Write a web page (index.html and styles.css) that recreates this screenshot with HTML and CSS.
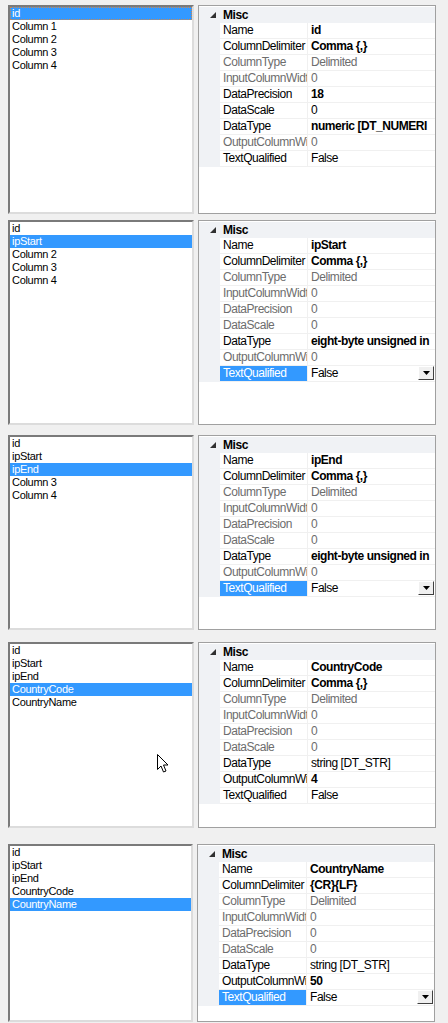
FILE: index.html
```html
<!DOCTYPE html>
<html>
<head>
<meta charset="utf-8">
<link rel="stylesheet" href="styles.css">
</head>
<body>
<div class="page">

  <div class="shot s1">
    <div class="list">
      <div class="item sel focus">id</div>
      <div class="item">Column 1</div>
      <div class="item">Column 2</div>
      <div class="item">Column 3</div>
      <div class="item">Column 4</div>
    </div>
    <div class="grid">
      <div class="row cat"><span class="mg"><svg class="tri" width="6" height="6" viewBox="0 0 6 6"><polygon points="6,0 6,6 0,6" fill="#303030"/></svg></span><span class="cname">Misc</span></div>
      <div class="row"><span class="mg"></span><span class="k">Name</span><span class="v b">id</span></div>
      <div class="row"><span class="mg"></span><span class="k">ColumnDelimiter</span><span class="v b">Comma {,}</span></div>
      <div class="row ro"><span class="mg"></span><span class="k">ColumnType</span><span class="v">Delimited</span></div>
      <div class="row ro"><span class="mg"></span><span class="k">InputColumnWidt</span><span class="v">0</span></div>
      <div class="row"><span class="mg"></span><span class="k">DataPrecision</span><span class="v b">18</span></div>
      <div class="row"><span class="mg"></span><span class="k">DataScale</span><span class="v">0</span></div>
      <div class="row"><span class="mg"></span><span class="k">DataType</span><span class="v b">numeric [DT_NUMERI</span></div>
      <div class="row ro"><span class="mg"></span><span class="k">OutputColumnWi</span><span class="v">0</span></div>
      <div class="row"><span class="mg"></span><span class="k">TextQualified</span><span class="v">False</span></div>
    </div>
  </div>

  <div class="shot s2">
    <div class="list">
      <div class="item">id</div>
      <div class="item sel">ipStart</div>
      <div class="item">Column 2</div>
      <div class="item">Column 3</div>
      <div class="item">Column 4</div>
    </div>
    <div class="grid">
      <div class="row cat"><span class="mg"><svg class="tri" width="6" height="6" viewBox="0 0 6 6"><polygon points="6,0 6,6 0,6" fill="#303030"/></svg></span><span class="cname">Misc</span></div>
      <div class="row"><span class="mg"></span><span class="k">Name</span><span class="v b">ipStart</span></div>
      <div class="row"><span class="mg"></span><span class="k">ColumnDelimiter</span><span class="v b">Comma {,}</span></div>
      <div class="row ro"><span class="mg"></span><span class="k">ColumnType</span><span class="v">Delimited</span></div>
      <div class="row ro"><span class="mg"></span><span class="k">InputColumnWidt</span><span class="v">0</span></div>
      <div class="row ro"><span class="mg"></span><span class="k">DataPrecision</span><span class="v">0</span></div>
      <div class="row ro"><span class="mg"></span><span class="k">DataScale</span><span class="v">0</span></div>
      <div class="row"><span class="mg"></span><span class="k">DataType</span><span class="v b">eight-byte unsigned in</span></div>
      <div class="row ro"><span class="mg"></span><span class="k">OutputColumnWi</span><span class="v">0</span></div>
      <div class="row selrow"><span class="mg"></span><span class="k">TextQualified</span><span class="v">False</span><span class="dd"><svg width="7" height="4" viewBox="0 0 7 4"><polygon points="0,0 7,0 3.5,4" fill="#000"/></svg></span></div>
    </div>
  </div>

  <div class="shot s3">
    <div class="list">
      <div class="item">id</div>
      <div class="item">ipStart</div>
      <div class="item sel">ipEnd</div>
      <div class="item">Column 3</div>
      <div class="item">Column 4</div>
    </div>
    <div class="grid">
      <div class="row cat"><span class="mg"><svg class="tri" width="6" height="6" viewBox="0 0 6 6"><polygon points="6,0 6,6 0,6" fill="#303030"/></svg></span><span class="cname">Misc</span></div>
      <div class="row"><span class="mg"></span><span class="k">Name</span><span class="v b">ipEnd</span></div>
      <div class="row"><span class="mg"></span><span class="k">ColumnDelimiter</span><span class="v b">Comma {,}</span></div>
      <div class="row ro"><span class="mg"></span><span class="k">ColumnType</span><span class="v">Delimited</span></div>
      <div class="row ro"><span class="mg"></span><span class="k">InputColumnWidt</span><span class="v">0</span></div>
      <div class="row ro"><span class="mg"></span><span class="k">DataPrecision</span><span class="v">0</span></div>
      <div class="row ro"><span class="mg"></span><span class="k">DataScale</span><span class="v">0</span></div>
      <div class="row"><span class="mg"></span><span class="k">DataType</span><span class="v b">eight-byte unsigned in</span></div>
      <div class="row ro"><span class="mg"></span><span class="k">OutputColumnWi</span><span class="v">0</span></div>
      <div class="row selrow"><span class="mg"></span><span class="k">TextQualified</span><span class="v">False</span><span class="dd"><svg width="7" height="4" viewBox="0 0 7 4"><polygon points="0,0 7,0 3.5,4" fill="#000"/></svg></span></div>
    </div>
  </div>

  <div class="shot s4">
    <div class="list">
      <div class="item">id</div>
      <div class="item">ipStart</div>
      <div class="item">ipEnd</div>
      <div class="item sel">CountryCode</div>
      <div class="item">CountryName</div>
      <svg class="cursor" width="13" height="20" viewBox="0 0 13 20"><path d="M0.5 0.5 L0.5 15.5 L4 12 L6.5 18 L9 17 L6.5 11 L11 11 Z" fill="#fff" stroke="#000" stroke-width="1" stroke-linejoin="miter"/></svg>
    </div>
    <div class="grid">
      <div class="row cat"><span class="mg"><svg class="tri" width="6" height="6" viewBox="0 0 6 6"><polygon points="6,0 6,6 0,6" fill="#303030"/></svg></span><span class="cname">Misc</span></div>
      <div class="row"><span class="mg"></span><span class="k">Name</span><span class="v b">CountryCode</span></div>
      <div class="row"><span class="mg"></span><span class="k">ColumnDelimiter</span><span class="v b">Comma {,}</span></div>
      <div class="row ro"><span class="mg"></span><span class="k">ColumnType</span><span class="v">Delimited</span></div>
      <div class="row ro"><span class="mg"></span><span class="k">InputColumnWidt</span><span class="v">0</span></div>
      <div class="row ro"><span class="mg"></span><span class="k">DataPrecision</span><span class="v">0</span></div>
      <div class="row ro"><span class="mg"></span><span class="k">DataScale</span><span class="v">0</span></div>
      <div class="row"><span class="mg"></span><span class="k">DataType</span><span class="v">string [DT_STR]</span></div>
      <div class="row"><span class="mg"></span><span class="k">OutputColumnWi</span><span class="v b">4</span></div>
      <div class="row"><span class="mg"></span><span class="k">TextQualified</span><span class="v">False</span></div>
    </div>
  </div>

  <div class="shot s5">
    <div class="list">
      <div class="item">id</div>
      <div class="item">ipStart</div>
      <div class="item">ipEnd</div>
      <div class="item">CountryCode</div>
      <div class="item sel">CountryName</div>
    </div>
    <div class="grid">
      <div class="row cat"><span class="mg"><svg class="tri" width="6" height="6" viewBox="0 0 6 6"><polygon points="6,0 6,6 0,6" fill="#303030"/></svg></span><span class="cname">Misc</span></div>
      <div class="row"><span class="mg"></span><span class="k">Name</span><span class="v b">CountryName</span></div>
      <div class="row"><span class="mg"></span><span class="k">ColumnDelimiter</span><span class="v b">{CR}{LF}</span></div>
      <div class="row ro"><span class="mg"></span><span class="k">ColumnType</span><span class="v">Delimited</span></div>
      <div class="row ro"><span class="mg"></span><span class="k">InputColumnWidt</span><span class="v">0</span></div>
      <div class="row ro"><span class="mg"></span><span class="k">DataPrecision</span><span class="v">0</span></div>
      <div class="row ro"><span class="mg"></span><span class="k">DataScale</span><span class="v">0</span></div>
      <div class="row"><span class="mg"></span><span class="k">DataType</span><span class="v">string [DT_STR]</span></div>
      <div class="row"><span class="mg"></span><span class="k">OutputColumnWi</span><span class="v b">50</span></div>
      <div class="row selrow"><span class="mg"></span><span class="k">TextQualified</span><span class="v">False</span><span class="dd"><svg width="7" height="4" viewBox="0 0 7 4"><polygon points="0,0 7,0 3.5,4" fill="#000"/></svg></span></div>
    </div>
  </div>

</div>
</body>
</html>
```

FILE: styles.css
```css
html, body {
  margin: 0;
  padding: 0;
  background: #f0f0f0;
}
.page {
  width: 448px;
  height: 1023px;
  overflow: hidden;
  display: flex;
  flex-direction: column;
}
.shot {
  display: flex;
  gap: 4px;
  padding-left: 8px;
  flex: none;
}
.s1 { margin-top: 5px; height: 209px; }
.s2 { margin-top: 6px; height: 205px; }
.s3 { margin-top: 10px; height: 195px; }
.s4 { margin-top: 12px; height: 186px; }
.s5 { margin-top: 16px; height: 178px; }
.s5 .list { width: 185px; }

.list {
  position: relative;
  box-sizing: border-box;
  width: 186px;
  height: 100%;
  background: #fff;
  border-style: solid;
  border-width: 2px;
  border-color: #7a7a7a #dcdcdc #dcdcdc #7a7a7a;
  font-family: "Liberation Sans", Arial, sans-serif;
  font-size: 11px;
  letter-spacing: -0.3px;
  color: #000;
}
.item {
  height: 13px;
  line-height: 13px;
  padding-left: 2px;
  white-space: nowrap;
}
.item.sel {
  background: #3399ff;
  color: #fff;
}
.item.focus {
  outline: 1px dotted #d0874a;
  outline-offset: -1px;
}
.cursor {
  position: absolute;
  left: 147px;
  top: 110px;
}

.grid {
  box-sizing: border-box;
  width: 238px;
  height: 100%;
  background: #fff;
  border: 1px solid #a0a0a0;
  padding-top: 1px;
  font-family: "Liberation Sans", Arial, sans-serif;
  font-size: 12px;
  letter-spacing: -0.45px;
  color: #000;
  overflow: hidden;
}
.row {
  display: flex;
  height: 16px;
  line-height: 15px;
  position: relative;
}
.mg {
  flex: none;
  width: 21px;
  height: 16px;
  background: #f0f2f5;
  position: relative;
}
.tri {
  position: absolute;
  left: 11px;
  top: 5px;
}
.cat {
  background: #f0f2f5;
}
.cname {
  font-weight: bold;
  padding-left: 3px;
  line-height: 16px;
}
.k {
  flex: none;
  width: 84px;
  padding-left: 3px;
  height: 15px;
  border-bottom: 1px solid #f0f0f0;
  border-right: 1px solid #f0f0f0;
  overflow: hidden;
  white-space: nowrap;
}
.v {
  flex: 1;
  min-width: 0;
  padding-left: 3px;
  height: 15px;
  border-bottom: 1px solid #f0f0f0;
  overflow: hidden;
  white-space: nowrap;
}
.b { font-weight: bold; }
.ro .k, .ro .v { color: #6d6d6d; }
.selrow .k {
  background: #3399ff;
  color: #fff;
}
.dd {
  position: absolute;
  right: 1px;
  top: 0;
  width: 16px;
  height: 14px;
  box-sizing: border-box;
  background: #f0f0f0;
  border-style: solid;
  border-width: 1px;
  border-color: #fff #404040 #404040 #fff;
  display: flex;
  align-items: center;
  justify-content: center;
}
```
